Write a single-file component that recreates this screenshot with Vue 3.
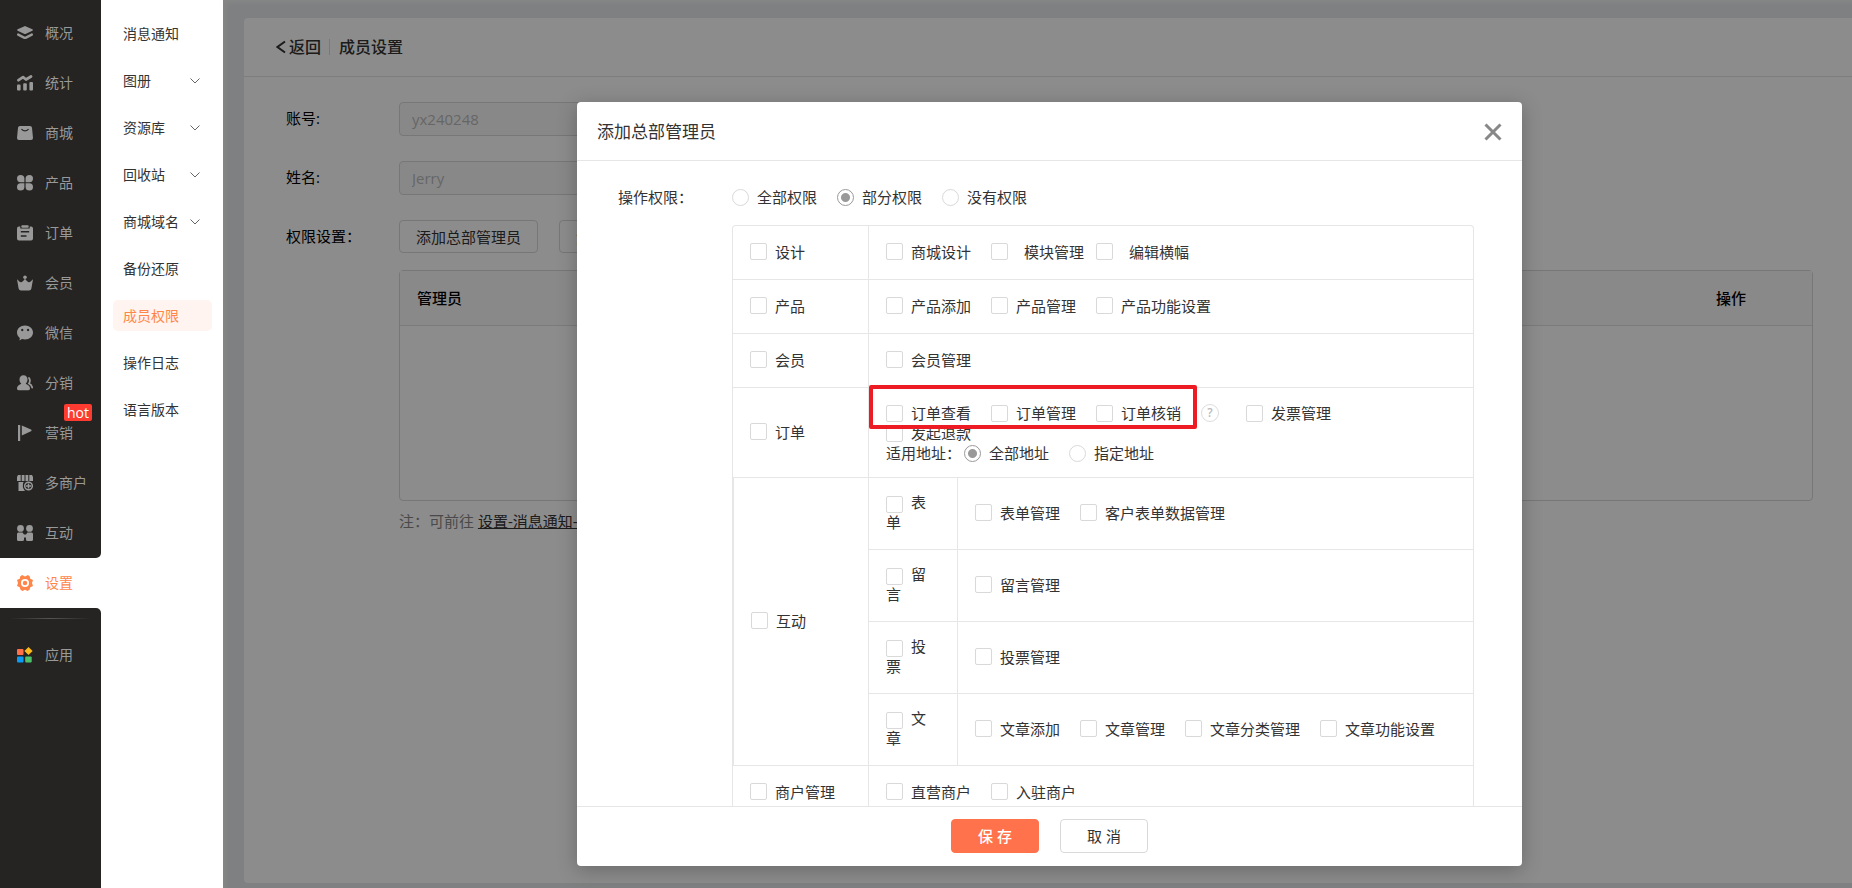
<script setup>
import { ref } from 'vue'

const mainMenu = [
  { id: 'overview', text: '概况' },
  { id: 'stats', text: '统计' },
  { id: 'mall', text: '商城' },
  { id: 'product', text: '产品' },
  { id: 'order', text: '订单' },
  { id: 'member', text: '会员' },
  { id: 'wechat', text: '微信' },
  { id: 'share', text: '分销' },
  { id: 'marketing', text: '营销', hot: true },
  { id: 'merchant', text: '多商户' },
  { id: 'interact', text: '互动' },
  { id: 'setting', text: '设置', active: true },
]

const subMenu = [
  { text: '消息通知' },
  { text: '图册', more: true },
  { text: '资源库', more: true },
  { text: '回收站', more: true },
  { text: '商城域名', more: true },
  { text: '备份还原' },
  { text: '成员权限', active: true },
  { text: '操作日志' },
  { text: '语言版本' },
]

const scopes = ['全部权限', '部分权限', '没有权限']
const scope = ref('部分权限')
const addresses = ['全部地址', '指定地址']
const address = ref('全部地址')

const topRows = [
  { name: '设计', items: [{ t: '商城设计' }, { t: '模块管理', wide: true }, { t: '编辑横幅', wide: true }] },
  { name: '产品', items: [{ t: '产品添加' }, { t: '产品管理' }, { t: '产品功能设置' }] },
  { name: '会员', items: [{ t: '会员管理' }] },
]
const orderItems = ['订单查看', '订单管理', '订单核销']
const groups = [
  { name: '表单', items: ['表单管理', '客户表单数据管理'] },
  { name: '留言', items: ['留言管理'] },
  { name: '投票', items: ['投票管理'] },
  { name: '文章', items: ['文章添加', '文章管理', '文章分类管理', '文章功能设置'] },
]
</script>

<template>
  <div class="page">
    <nav class="rail" aria-label="主导航">
      <div class="rail-top">
        <div v-for="m in mainMenu" :key="m.id" class="rail-slot" :class="{ on: m.active }">
          <a href="#" class="rail-item">
            <svg class="rail-icon" viewBox="0 0 16 16" fill="currentColor" aria-hidden="true">
              <g v-if="m.id === 'overview'">
                <path d="M7 1.4Q8 .8 9 1.4L15.400 4.300Q16.300 5 15.400 5.700L9 8.700Q8 9.200 7 8.700L.6 5.700Q-.3 5 .6 4.300Z" />
                <path d="M1.200 9.600 7 12.600Q8 13.200 9 12.600L14.800 9.600" fill="none" stroke="currentColor" stroke-width="2.400" stroke-linecap="round" />
              </g>
              <g v-else-if="m.id === 'stats'">
                <path d="M1.500 5.200 6 2.200 9 4.500 14 1.500" fill="none" stroke="currentColor" stroke-width="2.800" stroke-linecap="round" stroke-linejoin="round" />
                <rect x="0" y="9.500" width="3.600" height="6" rx="1" />
                <rect x="6.200" y="8.200" width="3.600" height="7.300" rx="1" />
                <rect x="12.400" y="7" width="3.600" height="8.500" rx="1" />
              </g>
              <g v-else-if="m.id === 'mall'">
                <path fill-rule="evenodd" d="M3 1h10q1.800 0 2 1.800L16 13q0 2-2 2H2q-2 0-2-2L1 2.800Q1.200 1 3 1Zm1 3.500q4 4.200 8 0l-.9-.8q-3.100 3-6.200 0Z" />
              </g>
              <g v-else-if="m.id === 'product'">
                <path d="M3.500 0Q7.400 0 7.400 3.500V7.200H3.500Q0 7.200 0 3.600 0 0 3.500 0ZM12.500 0Q16 0 16 3.600 16 7.200 12.500 7.200H8.600V3.500Q8.600 0 12.500 0ZM3.500 8.200H7.400V12Q7.400 15.500 3.500 15.500 0 15.500 0 12 0 8.200 3.500 8.200ZM8.600 8.200H12.500Q16 8.200 16 12 16 15.500 12.500 15.500 8.600 15.500 8.600 12Z" />
              </g>
              <g v-else-if="m.id === 'order'">
                <path fill-rule="evenodd" d="M2 1.500H3.300V3.500H12.700V1.500H14Q16 1.500 16 3.500V13.500Q16 15.500 14 15.500H2Q0 15.500 0 13.500V3.500Q0 1.500 2 1.500ZM3.800 6V7.500H12.200V6ZM3.800 10.300V11.800H9.500V10.300Z" />
                <rect x="4.300" y=".3" width="7.400" height="2.400" rx="1" />
              </g>
              <g v-else-if="m.id === 'member'">
                <circle cx="8" cy="2.200" r="1.800" />
                <path d="M0 4.200Q3 7.500 4.400 7.200 6 6.800 8 3.800 10 6.800 11.600 7.200 13 7.500 16 4.200L14.400 13.400Q14 15.500 12 15.500H4Q2 15.500 1.600 13.400Z" />
              </g>
              <g v-else-if="m.id === 'wechat'">
                <path fill-rule="evenodd" d="M8 .5C12.500.5 16 3.600 16 7.500S12.500 14.500 8 14.500L5 14 2.500 15.600 2.800 13C1 11.600 0 9.700 0 7.500 0 3.600 3.500.5 8 .5ZM5.200 3.800a1.200 1.200 0 1 0 .1 0ZM11 3.800a1.200 1.200 0 1 0 .1 0Z" />
              </g>
              <g v-else-if="m.id === 'share'">
                <path d="M6.500.3C9 .3 10.500 2.200 10.500 4.600 10.500 6.500 9.800 7.800 8.700 8.700 11.500 9.700 13 11.500 13 13.500Q13 15.300 11.500 15.300H1.500Q0 15.300 0 13.500C0 11.500 1.500 9.700 4.300 8.700 3.200 7.800 2.500 6.500 2.500 4.600 2.500 2.200 4 .3 6.500.3Z" />
                <path d="M12 3q1.800 2.500 0 5.500 2.800 1.500 3.200 4" fill="none" stroke="currentColor" stroke-width="1.800" stroke-linecap="round" />
              </g>
              <g v-else-if="m.id === 'marketing'">
                <rect x="1" y="0" width="2.200" height="16" />
                <path d="M4.800.5 14 4.600Q15.500 5.400 14 6.200L4.800 10.500Z" />
              </g>
              <g v-else-if="m.id === 'merchant'">
                <path d="M1 0H3.700V6H0V2ZM4.700 0H7.500V6H4.700ZM8.500 0H11.300V6H8.500ZM12.300 0H15L16 2V6H12.300Z" />
                <path d="M1.500 7H6.500Q4.500 11.500 8 16H1.500Z" />
                <circle cx="11.500" cy="11" r="3.800" fill="none" stroke="currentColor" stroke-width="1.500" />
                <path d="M9 11h5M11.500 8.500v5" fill="none" stroke="currentColor" stroke-width="1.500" />
              </g>
              <g v-else-if="m.id === 'interact'">
                <circle cx="3.500" cy="3.400" r="3.400" />
                <circle cx="12.500" cy="3.400" r="3.400" />
                <path d="M1.500 7.500H5.500L7 9.500H9L10.500 7.500H14.500Q16 7.500 16 9V14.500Q16 16 14.500 16H10.500Q9 16 9 14.500V12.500H7V14.500Q7 16 5.500 16H1.500Q0 16 0 14.500V9Q0 7.500 1.500 7.500Z" />
              </g>
              <g v-else>
                <path fill-rule="evenodd" d="M5 0 8 1.400 11 0 13 1.800 13 3.500 16 5 15 8 16 11 13.300 12.200 12.500 14.800 10.500 16 8 14.800 5.500 16 3.500 14.800 2.700 12.200 0 11 1 8 0 5 3 3.500 3 1.800ZM8 4A4 4 0 1 0 8 12 4 4 0 1 0 8 4Z" />
                <circle cx="8" cy="8" r="2.200" />
              </g>
            </svg>
            <span>{{ m.text }}</span>
            <span v-if="m.hot" class="hot">hot</span>
          </a>
        </div>
      </div>
      <div class="rail-bottom">
        <div class="rail-line"></div>
        <a href="#" class="rail-item">
          <svg class="rail-icon" viewBox="0 0 16 16" aria-hidden="true">
            <rect x="0" y="2" width="6.500" height="6" rx="1" fill="#ff704a" />
            <path d="M11.500 0 15.600 4 11.500 8 7.400 4Z" fill="#ffb919" />
            <rect x="0" y="9.600" width="6.500" height="6" rx="1" fill="#0a9bf5" />
            <rect x="8.200" y="9.600" width="6.500" height="6" rx="1" fill="#4cc26a" />
          </svg>
          <span>应用</span>
        </a>
      </div>
    </nav>

    <nav class="sub" aria-label="设置导航">
      <a v-for="s in subMenu" :key="s.text" href="#" class="sub-item" :class="{ on: s.active }">
        <span>{{ s.text }}</span>
        <svg v-if="s.more" class="chev" viewBox="0 0 10 6" aria-hidden="true"><path d="M.5.5 5 5 9.500.5" /></svg>
      </a>
    </nav>

    <main class="main">
      <section class="card">
        <header class="card-head">
          <a href="#" class="back">
            <svg viewBox="0 0 10 14" aria-hidden="true"><path d="M9 1.500 1.500 7 9 12.500" /></svg>返回</a>
          <h1>成员设置</h1>
        </header>
        <div class="form">
          <label class="lab" for="account">账号:</label>
          <input id="account" class="field" value="yx240248" disabled />
          <label class="lab" for="name">姓名:</label>
          <input id="name" class="field" value="Jerry" disabled />
          <span class="lab">权限设置：</span>
          <div class="btns">
            <button class="btn">添加总部管理员</button>
            <button class="btn">添加分部管理员</button>
          </div>
          <div class="list">
            <table class="admins">
              <thead><tr><th>管理员</th><th class="ops">操作</th></tr></thead>
              <tbody><tr><td colspan="2"></td></tr></tbody>
            </table>
            <p class="note">注：可前往 <a href="#">设置-消息通知-商家通知</a></p>
          </div>
        </div>
      </section>

      <div class="mask">
        <div class="modal" role="dialog" aria-labelledby="dlg">
          <header class="modal-head">
            <h2 id="dlg">添加总部管理员</h2>
            <button class="close" aria-label="关闭">
              <svg viewBox="0 0 18 18" aria-hidden="true"><path d="M1.500 1.500 16.500 16.500M16.500 1.500 1.500 16.500" /></svg>
            </button>
          </header>
          <div class="modal-body">
            <span class="perm-lab">操作权限：</span>
            <div class="perm">
              <div class="opts scope">
                <label v-for="s in scopes" :key="s" class="opt">
                  <input v-model="scope" type="radio" name="scope" :value="s" />{{ s }}
                </label>
              </div>
              <table class="grid">
                <colgroup><col class="c1" /><col class="c2" /><col /></colgroup>
                <tbody>
                  <tr v-for="r in topRows" :key="r.name">
                    <td><label class="opt"><input type="checkbox" />{{ r.name }}</label></td>
                    <td colspan="2">
                      <div class="opts">
                        <label v-for="i in r.items" :key="i.t" class="opt" :class="{ wide: i.wide }"><input type="checkbox" />{{ i.t }}</label>
                      </div>
                    </td>
                  </tr>
                  <tr class="order">
                    <td><label class="opt"><input type="checkbox" />订单</label></td>
                    <td colspan="2">
                      <div class="marker"></div>
                      <div class="opts">
                        <label v-for="i in orderItems" :key="i" class="opt"><input type="checkbox" />{{ i }}</label>
                        <span class="help">?</span>
                        <label class="opt"><input type="checkbox" />发票管理</label>
                      </div>
                      <div class="opts"><label class="opt"><input type="checkbox" />发起退款</label></div>
                      <div class="opts addr">
                        <span class="addr-lab">适用地址：</span>
                        <label v-for="a in addresses" :key="a" class="opt">
                          <input v-model="address" type="radio" name="address" :value="a" />{{ a }}
                        </label>
                      </div>
                    </td>
                  </tr>
                  <tr v-for="(g, n) in groups" :key="g.name" class="group">
                    <td v-if="n === 0" :rowspan="groups.length" class="span"><label class="opt"><input type="checkbox" />互动</label></td>
                    <td><label class="wrap"><input type="checkbox" />{{ g.name }}</label></td>
                    <td>
                      <div class="opts">
                        <label v-for="i in g.items" :key="i" class="opt"><input type="checkbox" />{{ i }}</label>
                      </div>
                    </td>
                  </tr>
                  <tr>
                    <td><label class="opt"><input type="checkbox" />商户管理</label></td>
                    <td colspan="2">
                      <div class="opts">
                        <label class="opt"><input type="checkbox" />直营商户</label>
                        <label class="opt"><input type="checkbox" />入驻商户</label>
                      </div>
                    </td>
                  </tr>
                </tbody>
              </table>
            </div>
          </div>
          <footer class="modal-foot">
            <button class="act save">保 存</button>
            <button class="act">取 消</button>
          </footer>
        </div>
      </div>
    </main>
  </div>
</template>

<style>
body {
  margin: 0;
  overflow: hidden;
}
</style>

<style scoped>
.page {
  display: flex;
  height: 100vh;
  overflow: hidden;
  background: #fff;
  color: #333;
  font: 400 15px/20px "Open Sans", "Noto Sans CJK SC", sans-serif;
}
.page * {
  box-sizing: border-box;
}
a {
  color: inherit;
  text-decoration: none;
}
button,
input {
  font: inherit;
  color: inherit;
}

/* dark navigation rail */
.rail {
  flex: none;
  width: 101px;
  display: flex;
  flex-direction: column;
  font-size: 14px;
  color: #999;
}
.rail-top {
  padding-top: 8px;
  background: linear-gradient(#252422 20px, #fff 20px);
}
.rail-slot {
  background: #252422;
}
.rail-slot.on {
  background: #fff;
  color: #ff8649;
}
.rail-slot:nth-last-child(2) {
  border-bottom-right-radius: 5px;
}
.rail-item {
  position: relative;
  display: flex;
  align-items: center;
  gap: 12px;
  height: 50px;
  padding-left: 17px;
}
.rail-icon {
  width: 16px;
  height: 16px;
}
.hot {
  position: absolute;
  top: -4px;
  right: 9px;
  padding: 0 3px;
  border-radius: 2px;
  background: #fd3b31;
  color: #fff;
  font-weight: 500;
  line-height: 17px;
}
.rail-bottom {
  flex: 1;
  background: #252422;
  border-top-right-radius: 5px;
  padding-top: 10px;
}
.rail-line {
  height: 1px;
  margin: 0 10px 11px;
  background: linear-gradient(90deg, transparent, #555, transparent);
}

/* second level navigation */
.sub {
  flex: none;
  width: 122px;
  padding: 18px 11px 0 12px;
  display: flex;
  flex-direction: column;
  gap: 16px;
  font-size: 14px;
}
.sub-item {
  display: flex;
  align-items: center;
  justify-content: space-between;
  height: 31px;
  padding: 0 12px 0 10px;
  border-radius: 5px;
}
.sub-item.on {
  background: #fff4ef;
  color: #ff8649;
}
.chev {
  width: 10px;
  height: 6px;
  fill: none;
  stroke: #666;
}

/* page behind the dialog */
.main {
  position: relative;
  flex: 1;
  min-width: 0;
  padding: 18px 0 5px 21px;
  background: #e6e9eb;
  box-shadow: inset 5px 5px 6px -3px #f6f6f6;
}
.card {
  height: 100%;
  background: #fff;
  border-radius: 4px 0 0 4px;
}
.card-head {
  display: flex;
  align-items: center;
  height: 59px;
  padding-left: 32px;
  border-bottom: 1px solid #e6e6e6;
  font-size: 16px;
}
.card-head h1 {
  margin: 0;
  padding-left: 9px;
  border-left: 1px solid #ddd;
  font-size: 16px;
  font-weight: 500;
  line-height: 16px;
}
.back {
  display: flex;
  align-items: center;
  gap: 3px;
  padding-right: 8px;
  font-weight: 500;
}
.back svg {
  width: 10px;
  height: 14px;
  fill: none;
  stroke: #333;
  stroke-width: 2;
}
.form {
  display: grid;
  grid-template-columns: 113px 1fr;
  row-gap: 25px;
  padding: 25px 39px 0 42px;
  color: #000;
}
.lab {
  line-height: 32px;
}
.field {
  width: 360px;
  height: 34px;
  padding: 0 12px;
  border: 1px solid #d9d9d9;
  border-radius: 4px;
  background: #f8f8f8;
  color: #bbb;
}
.btns {
  display: flex;
  gap: 21px;
}
.btn {
  height: 33px;
  padding: 0 16px;
  border: 1px solid #d9d9d9;
  border-radius: 4px;
  background: #fff;
  color: #333;
}
.list {
  grid-column: 2;
  margin-top: -8px;
}
.admins {
  width: 100%;
  border: 1px solid #d9d9d9;
  border-radius: 4px;
  border-spacing: 0;
}
.admins th {
  height: 55px;
  padding: 0 17px;
  background: #fafafa;
  border-bottom: 1px solid #e0e0e0;
  text-align: left;
  font-weight: 500;
}
.admins .ops {
  width: 113px;
}
.admins td {
  height: 174px;
}
.note {
  margin: 10px 0 0;
  color: #888;
}
.note a {
  color: #333;
  text-decoration: underline;
}

/* dialog */
.mask {
  position: absolute;
  inset: 0;
  display: flex;
  justify-content: center;
  padding: 102px 0 22px 24px;
  background: rgba(0, 0, 0, 0.45);
}
.modal {
  display: flex;
  flex-direction: column;
  width: 945px;
  background: #fff;
  border-radius: 4px;
  box-shadow: 0 4px 20px rgba(0, 0, 0, 0.25);
}
.modal-head {
  display: flex;
  align-items: center;
  justify-content: space-between;
  flex: none;
  height: 59px;
  padding: 2px 20px 0;
  border-bottom: 1px solid #e6e6e6;
}
.modal-head h2 {
  margin: 0;
  font-size: 17px;
  font-weight: 400;
}
.close {
  display: flex;
  padding: 0;
  border: 0;
  background: none;
}
.close svg {
  width: 18px;
  height: 18px;
  fill: none;
  stroke: #888;
  stroke-width: 3;
}
.modal-body {
  flex: 1;
  min-height: 0;
  overflow: hidden;
  display: grid;
  grid-template-columns: 114px 1fr;
  padding: 26px 48px 0 41px;
}
.perm {
  min-width: 0;
}
.opts {
  display: flex;
  gap: 20px;
}
.scope {
  margin-bottom: 18px;
}
.opt {
  display: flex;
  align-items: center;
  gap: 8px;
  height: 20px;
  white-space: nowrap;
}
.opt.wide {
  gap: 16px;
  margin-right: -8px;
}
input[type="checkbox"],
input[type="radio"] {
  appearance: none;
  flex: none;
  width: 17px;
  height: 17px;
  margin: 0;
  border: 1px solid #d9d9d9;
  border-radius: 2px;
  background: #fff;
}
input[type="radio"] {
  border-radius: 50%;
}
input[type="radio"]:checked {
  border-color: #999;
  background: radial-gradient(circle, #999 4px, #fff 5px);
}
.grid {
  width: 100%;
  table-layout: fixed;
  border: 1px solid #e6e6e6;
  border-bottom: 0;
  border-radius: 4px;
  border-spacing: 0;
}
.c1 {
  width: 136px;
}
.c2 {
  width: 89px;
}
.grid td {
  position: relative;
  height: 54px;
  padding: 0 17px 2px;
  border-bottom: 1px solid #e6e6e6;
}
.grid td:not(:last-child) {
  border-right: 1px solid #e6e6e6;
}
.grid .order td {
  height: 90px;
}
.grid .order td:last-child {
  padding-top: 3px;
}
.grid .group td {
  height: 72px;
}
.grid .span {
  border-left: 1px solid #e6e6e6;
}
.wrap {
  display: block;
  line-height: 19px;
}
.wrap input {
  display: inline-block;
  margin-right: 8px;
  vertical-align: middle;
}
.marker {
  position: absolute;
  z-index: 1;
  top: -3px;
  left: 0;
  width: 328px;
  height: 44px;
  border: 4px solid #ed1c24;
  border-radius: 2px;
}
.help {
  width: 18px;
  height: 18px;
  margin: 1px 7px 0 0;
  border: 1px solid #ddd;
  border-radius: 50%;
  color: #bbb;
  font-size: 12px;
  font-weight: 600;
  line-height: 16px;
  text-align: center;
}
.addr-lab {
  margin-right: -17px;
}
.modal-foot {
  display: flex;
  justify-content: center;
  flex: none;
  gap: 21px;
  height: 60px;
  padding-top: 12px;
  border-top: 1px solid #e6e6e6;
}
.act {
  width: 88px;
  height: 34px;
  padding: 0;
  border: 1px solid #d9d9d9;
  border-radius: 4px;
  background: #fff;
}
.act.save {
  border-color: #ff724b;
  background: #ff724b;
  color: #fff;
  font-weight: 500;
}
</style>
